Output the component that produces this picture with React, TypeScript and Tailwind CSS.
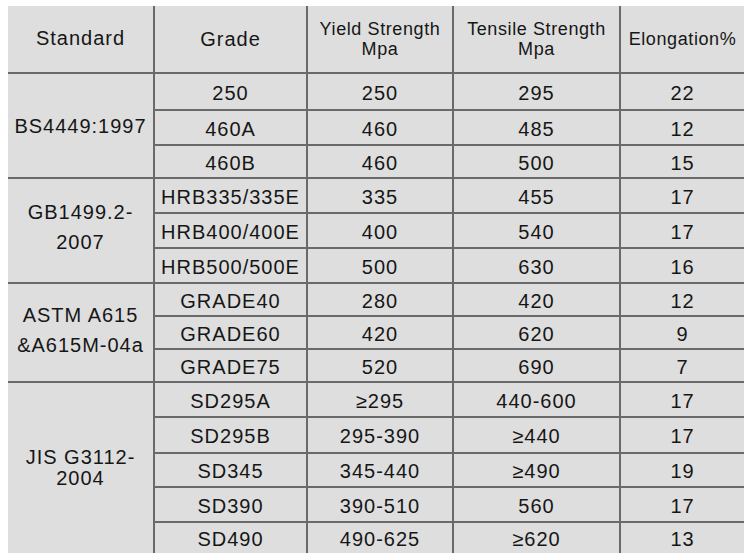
import React from "react";

type Group = { std: string[]; rows: string[][]; cls: string };

const groups: Group[] = [
  {
    std: ["BS4449:1997"],
    cls: "row-span-3 leading-[21px] pt-[2px]",
    rows: [
      ["250", "250", "295", "22"],
      ["460A", "460", "485", "12"],
      ["460B", "460", "500", "15"],
    ],
  },
  {
    std: ["GB1499.2-", "2007"],
    cls: "row-span-3 leading-[30px] pb-[8px]",
    rows: [
      ["HRB335/335E", "335", "455", "17"],
      ["HRB400/400E", "400", "540", "17"],
      ["HRB500/500E", "500", "630", "16"],
    ],
  },
  {
    std: ["ASTM A615", "&A615M-04a"],
    cls: "row-span-3 leading-[30px] pb-[6px]",
    rows: [
      ["GRADE40", "280", "420", "12"],
      ["GRADE60", "420", "620", "9"],
      ["GRADE75", "520", "690", "7"],
    ],
  },
  {
    std: ["JIS G3112-", "2004"],
    cls: "row-span-5 leading-[21px]",
    rows: [
      ["SD295A", "≥295", "440-600", "17"],
      ["SD295B", "295-390", "≥440", "17"],
      ["SD345", "345-440", "≥490", "19"],
      ["SD390", "390-510", "560", "17"],
      ["SD490", "490-625", "≥620", "13"],
    ],
  },
];

export default function App() {
  const cell =
    "bg-[#dedede] flex items-center justify-center pt-[2px] text-[20px] tracking-[1px] text-[#161616] leading-none";
  const head =
    "bg-[#dedede] flex flex-col items-center justify-center text-[18px] tracking-[0.6px] text-[#161616] leading-[20px] text-center";
  return (
    <div
      className="w-[750px] h-[558px] bg-white pl-[8px] pt-[6px]"
      style={{ fontFamily: '"Liberation Sans", Arial, sans-serif' }}
    >
      <div className="grid w-[736px] grid-cols-[145px_151px_144px_165px_123px] grid-rows-[66px_35px_33px_31px_33px_33px_33px_31px_31px_31px_33px_34px_32px_33px_30px] gap-[2px] bg-[#6a6a6a]">
        <div className={`${head} text-[20px] tracking-[1px] pb-[2px]`}>Standard</div>
        <div className={`${head} text-[20px] tracking-[1px]`}>Grade</div>
        <div className={head}>
          <span>Yield Strength</span>
          <span>Mpa</span>
        </div>
        <div className={head}>
          <span>Tensile Strength</span>
          <span>Mpa</span>
        </div>
        <div className={head}>Elongation%</div>
        {groups.map((g) => (
          <React.Fragment key={g.std.join("")}>
            <div
              className={`${g.cls} bg-[#dedede] flex flex-col items-center justify-center text-[20px] tracking-[1px] text-[#161616]`}
            >
              {g.std.map((s) => (
                <span key={s}>{s}</span>
              ))}
            </div>
            {g.rows.map((r, i) => (
              <React.Fragment key={i}>
                {r.map((v, j) => (
                  <div key={j} className={cell}>
                    {v}
                  </div>
                ))}
              </React.Fragment>
            ))}
          </React.Fragment>
        ))}
      </div>
    </div>
  );
}
